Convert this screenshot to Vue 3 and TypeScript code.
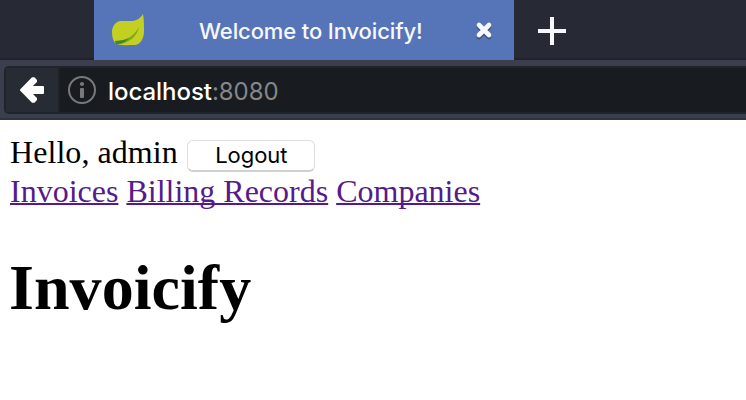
<script setup lang="ts">
import { ref } from 'vue'

interface NavLink {
  label: string
  href: string
}

const tabTitle = 'Welcome to Invoicify!'
const host = 'localhost'
const port = ':8080'
const user = ref('admin')
const links: NavLink[] = [
  { label: 'Invoices', href: '#invoices' },
  { label: 'Billing Records', href: '#billing-records' },
  { label: 'Companies', href: '#companies' },
]
</script>

<template>
  <div class="window">
    <header class="tabs">
      <div class="tab">
        <svg class="leaf" width="34" height="34" viewBox="0 0 34 34">
          <path d="M32 1C29 5 27 7 22 8L9 8C4 9 1 14 1 19C1 24 2 27 4 30C8 33 16 32 24 32C30 31 33 25 33 18C33 12 33 6 32 1Z" fill="#c3d021" />
          <path d="M4 28C13 28 22 25 28 14C26 24 17 30 9 31C5 31 4 30 4 28Z" fill="#7aa929" />
          <path d="M4 28C9 28 14 27 18 25C15 29 11 30 9 31H5Z" fill="#438a27" />
        </svg>
        <span class="title">{{ tabTitle }}</span>
        <svg class="close" width="18" height="18" viewBox="0 0 18 18">
          <path d="M4 4L14 14M14 4L4 14" />
        </svg>
      </div>
      <svg class="plus" width="28" height="28" viewBox="0 0 28 28">
        <path d="M14 0V28M0 14H28" />
      </svg>
    </header>
    <div class="toolbar">
      <div class="address">
        <div class="back">
          <svg width="24" height="28" viewBox="0 0 24 28">
            <path d="M1 14L12.5 2.2H14L16 4.5V5.5L10.5 11H23V17H10.5L16 22.5V23.5L14 25.8H12.5Z" />
          </svg>
        </div>
        <svg class="info" width="28" height="28" viewBox="0 0 28 28">
          <circle cx="14" cy="14" r="13" fill="none" stroke="#77797b" stroke-width="2" />
          <circle cx="14" cy="8" r="2.1" fill="#77797b" />
          <rect x="12" y="12" width="4" height="10" rx="1" fill="#77797b" />
        </svg>
        <span class="host">{{ host }}</span><span class="port">{{ port }}</span>
      </div>
    </div>
    <main class="page">
      <div class="greeting">
        <span class="hello">Hello, {{ user }}</span>
        <button class="logout" type="button">Logout</button>
      </div>
      <nav class="links">
        <a v-for="link in links" :key="link.label" :href="link.href">{{ link.label }}</a>
      </nav>
      <h1>Invoicify</h1>
    </main>
  </div>
</template>

<style>
body {
  margin: 0;
  background: #fff;
}
</style>

<style scoped>
.window {
  height: 400px;
  overflow: hidden;
  background: #fff;
}
.tabs {
  display: flex;
  align-items: flex-start;
  box-sizing: border-box;
  height: 60px;
  padding-left: 94px;
  background: linear-gradient(#272a35 58px, #21232c 58px);
}
.tab {
  display: flex;
  align-items: center;
  box-sizing: border-box;
  width: 420px;
  height: 60px;
  padding: 0 21px 0 17px;
  background: #5675b9;
}
.leaf {
  flex: none;
}
.title {
  flex: 1;
  margin-left: 54px;
  color: #f8f8fc;
  font: 500 22px/30px Inter, sans-serif;
  letter-spacing: -0.12px;
  white-space: nowrap;
  padding-top: 2px;
}
.close {
  flex: none;
  fill: none;
  stroke: #f7f7fc;
  stroke-width: 4.6;
  stroke-linecap: round;
  filter: drop-shadow(0 2px 0 #40557f);
}
.plus {
  margin: 17px 0 0 24px;
  fill: none;
  stroke: #f7f7fc;
  stroke-width: 4;
}
.toolbar {
  box-sizing: border-box;
  height: 60px;
  padding: 6px 0 0 4px;
  background: linear-gradient(#3b3f4d 58px, #2f3340 58px);
}
.address {
  display: flex;
  align-items: center;
  box-sizing: border-box;
  height: 48px;
  border: 2px solid #20242a;
  border-right: 0;
  border-radius: 5px 0 0 5px;
  background: #181b1f;
}
.back {
  display: flex;
  align-items: center;
  box-sizing: border-box;
  width: 54px;
  height: 44px;
  padding-left: 14px;
  border-right: 2px solid #1e2227;
  background: #272c34;
}
.back svg {
  fill: #fff;
  stroke: #fff;
  stroke-width: 2;
  stroke-linejoin: round;
}
.info {
  margin-left: 8px;
}
.host,
.port {
  font: 500 24px/32px Inter, sans-serif;
  letter-spacing: -0.05px;
  padding-top: 4px;
}
.host {
  margin-left: 12px;
  color: #fff;
}
.port {
  color: #85878a;
  font-weight: 400;
}
.page {
  padding: 14px 10px 0;
  color: #000;
  font: 32px/37px "Liberation Serif", serif;
}
.greeting {
  display: flex;
  height: 37px;
}
.hello {
  letter-spacing: 0.06px;
}
.logout {
  box-sizing: border-box;
  width: 128px;
  height: 32px;
  margin: 6px 0 0 9.5px;
  padding: 0 0 1px;
  border: 1px solid #dedede;
  border-bottom: 2px solid #d0d0d0;
  border-radius: 6px;
  background: #fff;
  color: #000;
  font: 22px/28px Inter, sans-serif;
  letter-spacing: -0.05px;
}
.links {
  display: flex;
  gap: 8px;
  margin-top: 2px;
}
.links a {
  color: #551a8b;
  text-decoration: underline;
  text-decoration-thickness: 2px;
  text-decoration-skip-ink: none;
}
h1 {
  margin: 41px 0 0 -1px;
  font-size: 64px;
  line-height: 74px;
  letter-spacing: 0.05px;
}
</style>
